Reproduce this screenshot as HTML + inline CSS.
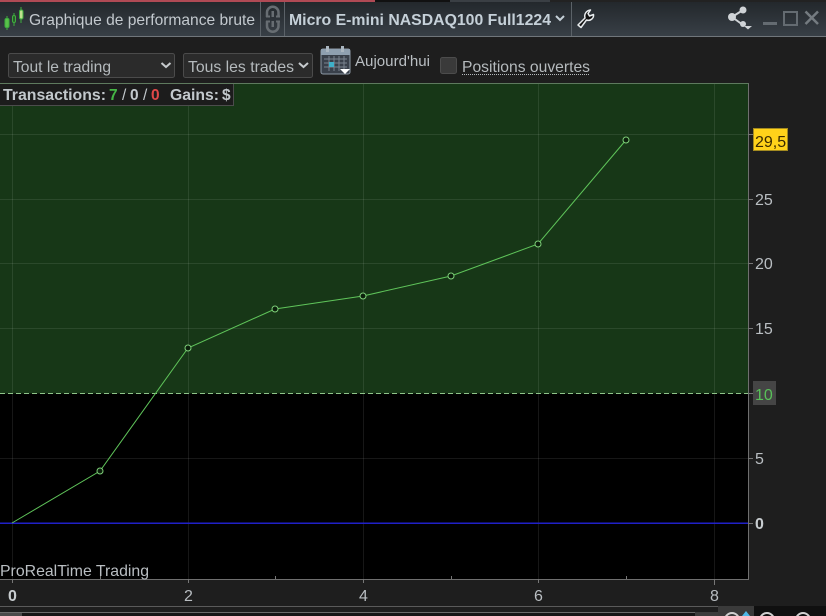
<!DOCTYPE html>
<html>
<head>
<meta charset="utf-8">
<style>
html,body{margin:0;padding:0;background:#1e1e1e;}
#p{position:relative;width:826px;height:616px;overflow:hidden;background:#1e1e1e;font-family:"Liberation Sans",sans-serif;}
</style>
</head>
<body>
<div id="p">
<svg width="826" height="616" viewBox="0 0 826 616" style="position:absolute;left:0;top:0;font-family:'Liberation Sans',sans-serif">
<defs>
<linearGradient id="hd" x1="0" y1="0" x2="0" y2="1"><stop offset="0" stop-color="#23282c"/><stop offset="1" stop-color="#383f46"/></linearGradient>
</defs>
<!-- top strip -->
<rect x="0" y="0" width="826" height="3" fill="#3a3f44"/>
<rect x="0" y="0" width="375" height="2" fill="#b04a55"/>
<rect x="375" y="0" width="75" height="2" fill="#111"/>
<rect x="550" y="0" width="276" height="2" fill="#222"/>
<!-- header -->
<rect x="0" y="2" width="826" height="34" fill="url(#hd)"/>
<rect x="0" y="36" width="826" height="1" fill="#70767b"/>
<rect x="260" y="2" width="1" height="34" fill="#5b6268"/>
<rect x="284" y="2" width="1" height="34" fill="#5b6268"/>
<rect x="571" y="2" width="1" height="34" fill="#5b6268"/>
<!-- candle icon -->
<g stroke="#3fb03f" fill="#59c24a">
<path d="M7 16V30" stroke-width="1"/><rect x="5" y="18.500" width="4" height="9" rx="1.500" stroke-width="1"/>
<path d="M14 13V26" stroke-width="1"/><rect x="12.500" y="15.500" width="3" height="7" rx="1.500" fill="#2a5a2a" stroke-width="1"/>
<path d="M21 7V23" stroke-width="1"/><rect x="19.500" y="10" width="3.500" height="9" rx="1.500" fill="#bfe08f" stroke-width="1"/>
</g>
<text x="29" y="25" font-size="16" fill="#c3c9ce" textLength="226" lengthAdjust="spacingAndGlyphs">Graphique de performance brute</text>
<!-- link icon -->
<g fill="none" stroke="#676d72" stroke-width="2.500">
<path d="M267 17V12.500a5.700 5.700 0 0 1 11.500 0V17"/>
<path d="M267 21V26a5.700 5.700 0 0 0 11.500 0V21"/>
</g>
<g fill="#676d72"><rect x="266" y="15.500" width="4" height="2"/><rect x="276" y="15.500" width="4" height="2"/><rect x="266" y="20.500" width="4" height="2"/><rect x="276" y="20.500" width="4" height="2"/><rect x="271.500" y="11" width="2.500" height="6"/><rect x="271.500" y="21" width="2.500" height="6"/></g>
<text x="289" y="25" font-size="15.500" font-weight="bold" fill="#c5d0d8" textLength="262" lengthAdjust="spacingAndGlyphs">Micro E-mini NASDAQ100 Full1224</text>
<path d="M556 16l4 4 4-4" fill="none" stroke="#c5d0d8" stroke-width="2"/>
<!-- wrench -->
<path d="M578 25l7-7c-1-3.500 1-7.500 5.500-8l-2.500 3.500 1.500 2.500 4-1.500c.5 3.500-3 7-7 5.500l-5.500 7.500z" fill="#111" stroke="#e8ecee" stroke-width="1.500" stroke-linejoin="round"/>
<!-- share -->
<g fill="#cfd3d6" stroke="#cfd3d6">
<path d="M732 17L743 10M732 17L743 25" stroke-width="2" fill="none"/>
<circle cx="732" cy="17" r="4" stroke="none"/>
<circle cx="743" cy="10" r="3.500" stroke="none"/>
<circle cx="743" cy="24" r="3" stroke="none"/>
<path d="M744 26h8l-4 3.500z" stroke="none"/>
</g>
<!-- window controls -->
<rect x="763" y="22" width="14" height="3" fill="#646b71"/>
<rect x="784" y="12" width="13" height="13" fill="none" stroke="#646b71" stroke-width="2"/>
<path d="M805.500 11.500l12.500 12.500M818 11.500l-12.500 12.500" stroke="#747b80" stroke-width="2.500"/>
<!-- toolbar row -->
<rect x="8.500" y="53.500" width="166" height="24" rx="2" fill="#2b2b2b" stroke="#4b4b4b"/>
<text x="13" y="72" font-size="16" fill="#b5babd" textLength="98" lengthAdjust="spacingAndGlyphs">Tout le trading</text>
<path d="M161.500 63l4.500 4 4.500-4" fill="none" stroke="#c7cbce" stroke-width="2"/>
<rect x="183.500" y="53.500" width="129" height="24" rx="2" fill="#2b2b2b" stroke="#4b4b4b"/>
<text x="188" y="72" font-size="16" fill="#b5babd" textLength="106" lengthAdjust="spacingAndGlyphs">Tous les trades</text>
<path d="M299 63l4.500 4 4.500-4" fill="none" stroke="#c7cbce" stroke-width="2"/>
<!-- calendar -->
<rect x="321" y="49" width="29" height="25" rx="2" fill="#39404a" stroke="#8d9aa6"/>
<rect x="321" y="49" width="29" height="6" fill="#8fa0b0"/>
<rect x="326" y="46" width="3" height="6" fill="#aab6c0"/>
<rect x="341" y="46" width="3" height="6" fill="#aab6c0"/>
<g stroke="#7a8490" stroke-width="1"><path d="M324 59h23M324 63h23M324 67h23M329 56v15M334 56v15M339 56v15M344 56v15"/></g>
<rect x="329" y="62" width="5" height="5" fill="#3fb0c8"/>
<path d="M340 69h10l-5 5z" fill="#fff"/>
<text x="355" y="66" font-size="15" fill="#b9bec2" textLength="75" lengthAdjust="spacingAndGlyphs">Aujourd'hui</text>
<rect x="440.500" y="57.500" width="16" height="16" rx="2" fill="#3a3a3a" stroke="#4c4c4c"/>
<text x="462" y="72" font-size="16" fill="#b5babd" textLength="128" lengthAdjust="spacingAndGlyphs">Positions ouvertes</text>
<path d="M462 74.500h128" stroke="#b5babd" stroke-width="1" stroke-dasharray="1 1"/>
<!-- plot -->
<rect x="0" y="83" width="748" height="496" fill="#000"/>
<rect x="0" y="83" width="748" height="310.500" fill="#173717"/>
<g stroke="#ffffff" stroke-opacity=".09" stroke-width="1">
<path d="M0 134.500H748M0 199.500H748M0 263.500H748M0 328.500H748M0 458.500H748"/>
<path d="M12.500 83V579M188.500 83V579M363.500 83V579M538.500 83V579M714.500 83V579"/>
</g>
<path d="M0 393.500H748" stroke="#8fc48a" stroke-width="1" stroke-dasharray="5 3"/>
<rect x="0" y="522.500" width="748" height="1.500" fill="#2020c8"/>
<path d="M748.500 83V579.500H0" fill="none" stroke="#6f6f6f" stroke-width="1"/>
<path d="M0 83.500H748.500" stroke="#5e7a5e" stroke-width="1"/>
<!-- axis ticks -->
<g stroke="#777" stroke-width="1">
<path d="M100.500 579v-3M275.500 579v-3M451.500 579v-3M626.500 579v-3M12.500 579v4M188.500 579v4M363.500 579v4M538.500 579v4M714.500 579v6"/>
<path d="M748 134.500h5M748 199.500h5M748 263.500h5M748 328.500h5M748 393.500h5M748 458.500h5M748 523.500h5"/>
</g>
<!-- line -->
<polyline points="12,523 100,471 188,348 275,309 363,296 451,276 538,244 626,140" fill="none" stroke="#5fc45a" stroke-width="1"/>
<g fill="#0b1f0b" stroke="#7fd07a" stroke-width="1">
<circle cx="100" cy="471" r="3"/><circle cx="188" cy="348" r="3"/><circle cx="275" cy="309" r="3"/><circle cx="363" cy="296" r="3"/><circle cx="451" cy="276" r="3"/><circle cx="538" cy="244" r="3"/><circle cx="626" cy="140" r="3"/>
</g>
<!-- y labels -->
<g font-size="16" fill="#b9bec2">
<text x="755" y="205">25</text>
<text x="755" y="269">20</text>
<text x="755" y="334">15</text>
<text x="755" y="464">5</text>
</g>
<text x="755" y="529" font-size="16" font-weight="bold" fill="#c8cdd0">0</text>
<rect x="753.500" y="128.500" width="34" height="22" fill="#ffd21a" stroke="#a38a20"/>
<text x="755" y="147" font-size="16" fill="#3a2a00">29,5</text>
<rect x="753" y="381" width="23" height="24" fill="#454545"/>
<text x="755" y="400" font-size="16" fill="#58c058">10</text>
<!-- x labels -->
<text x="8" y="601" font-size="16" font-weight="bold" fill="#c8cdd0">0</text>
<g font-size="16" fill="#b9bec2">
<text x="184" y="601">2</text><text x="359" y="601">4</text><text x="534" y="601">6</text><text x="710" y="601">8</text>
</g>
<text x="0" y="576" font-size="16" fill="#b9bec2" textLength="149" lengthAdjust="spacingAndGlyphs">ProRealTime Trading</text>
<!-- transactions box -->
<rect x="0" y="84" width="233" height="21.500" fill="#1c1c1c"/>
<path d="M233.500 84V105.500H0" fill="none" stroke="#4c4c4c"/>
<g font-size="15.500" font-weight="bold" fill="#c2c8cc">
<text x="3" y="100" textLength="103" lengthAdjust="spacingAndGlyphs">Transactions:</text>
<text x="109" y="100" fill="#45b545">7</text>
<text x="122" y="100" font-weight="normal">/</text>
<text x="130" y="100">0</text>
<text x="143" y="100" font-weight="normal">/</text>
<text x="151" y="100" fill="#e04848">0</text>
<text x="170" y="100" textLength="49" lengthAdjust="spacingAndGlyphs">Gains:</text>
<text x="222" y="100">$</text>
</g>
<!-- bottom strip -->
<rect x="0" y="606" width="826" height="1" fill="#5a5a5a"/>
<rect x="0" y="612" width="826" height="1" fill="#6a6a6a"/>
<rect x="0" y="613" width="826" height="3" fill="#161616"/>
<rect x="0" y="613" width="22" height="3" fill="#4a4a4a"/>
<rect x="695" y="612" width="23" height="4" fill="#3c3c3c"/>
<rect x="718" y="606" width="36" height="10" fill="#3a3a3a"/>
<rect x="754" y="606" width="72" height="10" fill="#101010"/>
<g fill="none" stroke="#d0d0d0" stroke-width="2"><circle cx="732" cy="620" r="7"/><circle cx="767" cy="620" r="7"/><circle cx="803" cy="620" r="7"/></g>
<path d="M742 616l4-5 4 5z" fill="#4fb8e8"/>
</svg>
</div>
</body>
</html>
